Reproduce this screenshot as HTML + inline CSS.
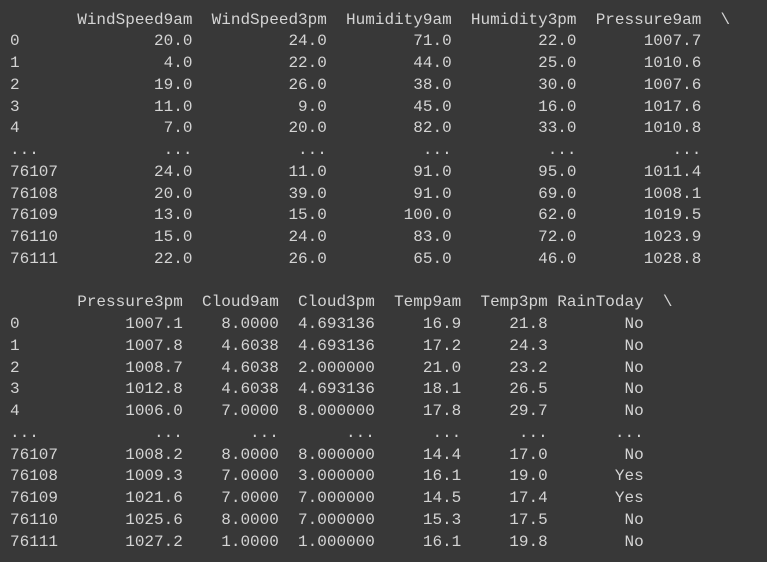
<!DOCTYPE html>
<html><head><meta charset="utf-8"><style>
html,body{margin:0;padding:0;background:#383838;width:767px;height:562px;overflow:hidden}
pre{margin:0;padding:9.5px 0 0 10px;font-family:"Liberation Mono",monospace;font-size:16px;line-height:21.75px;color:#d4d4d4}
</style></head><body><pre>       WindSpeed9am  WindSpeed3pm  Humidity9am  Humidity3pm  Pressure9am  \
0              20.0          24.0         71.0         22.0       1007.7   
1               4.0          22.0         44.0         25.0       1010.6   
2              19.0          26.0         38.0         30.0       1007.6   
3              11.0           9.0         45.0         16.0       1017.6   
4               7.0          20.0         82.0         33.0       1010.8   
...             ...           ...          ...          ...          ...   
76107          24.0          11.0         91.0         95.0       1011.4   
76108          20.0          39.0         91.0         69.0       1008.1   
76109          13.0          15.0        100.0         62.0       1019.5   
76110          15.0          24.0         83.0         72.0       1023.9   
76111          22.0          26.0         65.0         46.0       1028.8   

       Pressure3pm  Cloud9am  Cloud3pm  Temp9am  Temp3pm RainToday  \
0           1007.1    8.0000  4.693136     16.9     21.8        No   
1           1007.8    4.6038  4.693136     17.2     24.3        No   
2           1008.7    4.6038  2.000000     21.0     23.2        No   
3           1012.8    4.6038  4.693136     18.1     26.5        No   
4           1006.0    7.0000  8.000000     17.8     29.7        No   
...            ...       ...       ...      ...      ...       ...   
76107       1008.2    8.0000  8.000000     14.4     17.0        No   
76108       1009.3    7.0000  3.000000     16.1     19.0       Yes   
76109       1021.6    7.0000  7.000000     14.5     17.4       Yes   
76110       1025.6    8.0000  7.000000     15.3     17.5        No   
76111       1027.2    1.0000  1.000000     16.1     19.8        No   
</pre></body></html>
